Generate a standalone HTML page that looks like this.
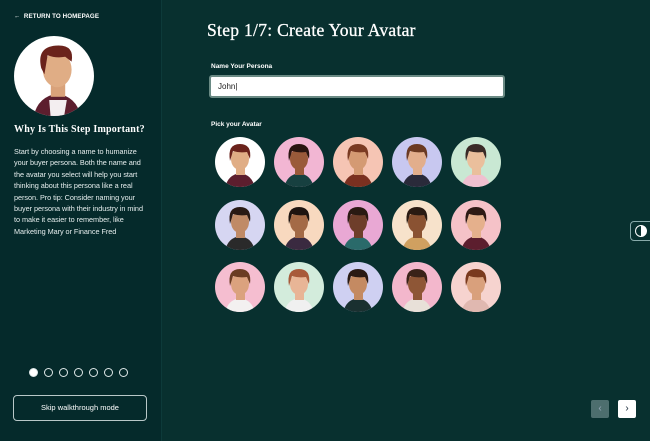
<!DOCTYPE html>
<html><head><meta charset="utf-8"><style>
*{margin:0;padding:0;box-sizing:border-box}
body{width:650px;height:441px;overflow:hidden;background:#08302f;font-family:"Liberation Sans",sans-serif;color:#fff;position:relative}
.side{position:absolute;left:0;top:0;width:162px;height:441px;background:#052a2b;border-right:1px solid #0d3a3a}
.ret{position:absolute;left:14px;top:13px;font-size:6.2px;font-weight:bold;letter-spacing:.1px}
.big{position:absolute;left:14px;top:36px;width:80px;height:80px;border-radius:50%;overflow:hidden}
h3{position:absolute;left:14px;top:124px;font-family:"Liberation Serif",serif;font-weight:bold;font-size:10px;letter-spacing:.2px}
.txt{position:absolute;left:14px;top:146px;width:134px;font-size:7.3px;line-height:11.4px;color:#e6eeee;letter-spacing:-.05px}
.dots{position:absolute;left:29px;top:368px;display:flex;gap:6px}
.dots span{width:9px;height:9px;border-radius:50%;border:1.2px solid #dfe8e8}
.dots span:first-child{background:#fff}
.skip{position:absolute;left:13px;top:395px;width:134px;height:26px;border:1.3px solid #b9c8c8;border-radius:4px;font-size:7.5px;text-align:center;line-height:24px}
h1{position:absolute;left:207px;top:20px;font-family:"Liberation Serif",serif;font-weight:normal;font-size:17.5px;letter-spacing:.3px;-webkit-text-stroke:.3px #fff}
.lab{position:absolute;left:211px;font-size:6.5px;font-weight:bold}
.inp{position:absolute;left:209px;top:75px;width:296px;height:23px;background:#fff;border:2px solid #6a8a84;border-radius:3px;color:#222;font-size:8px;padding-left:7px;line-height:19px}
.av{position:absolute;width:50px;height:50px;border-radius:50%;overflow:hidden}
.tog{position:absolute;left:630px;top:221px;width:22px;height:20px;border:1.2px solid #8aa;border-radius:4px 0 0 4px}
.nb{position:absolute;top:400px;width:18px;height:18px;border-radius:2px;font-size:10px;text-align:center;line-height:18px}
</style></head><body>
<div class="side">
<div class="ret">&#8592;&nbsp; RETURN TO HOMEPAGE</div>
<div class="big"><svg width="80" height="80" viewBox="0 0 50 50"><rect width="50" height="50" fill="#fff"/><path d="M12 52 Q14 38 27 36 Q40 38 42 52Z" fill="#5c1e2e"/><path d="M22 40 L33 40 L31 52 L23 52Z" fill="#f3eef0"/><rect x="23" y="28" width="9" height="10" fill="#d9a27a"/><ellipse cx="27" cy="21" rx="9" ry="11" fill="#e0ad85"/><path d="M17 20 Q14 7 26 6 Q38 5 36 16 L32 13 Q26 14 21 12 L19 24Z" fill="#6b231c"/></svg></div>
<h3>Why Is This Step Important?</h3>
<div class="txt">Start by choosing a name to humanize your buyer persona. Both the name and the avatar you select will help you start thinking about this persona like a real person. Pro tip: Consider naming your buyer persona with their industry in mind to make it easier to remember, like Marketing Mary or Finance Fred</div>
<div class="dots"><span></span><span></span><span></span><span></span><span></span><span></span><span></span></div>
<div class="skip">Skip walkthrough mode</div>
</div>
<h1>Step 1/7: Create Your Avatar</h1>
<div class="lab" style="top:63px">Name Your Persona</div>
<div class="inp">John|</div>
<div class="lab" style="top:121px">Pick your Avatar</div>
<div id="grid"></div>
<div class="tog"><div style="margin:3px 0 0 4px;width:12px;height:12px;border-radius:50%;border:1.3px solid #fff;background:linear-gradient(90deg,#08302f 50%,#fff 50%)"></div></div>
<div class="nb" style="left:591px;background:#4d6e6e;color:#9ab">&#8249;</div>
<div class="nb" style="left:618px;background:#fff;color:#123">&#8250;</div>
<script>
var bgs=["#ffffff","#f2b6d3","#f6c5b4","#c8c8f0","#c9e8d3","#d6d6f2","#f8d9bf","#e9a8d4","#f7e2cb","#f5c2c8","#f5bed0","#d3ecdc","#cfd0f2","#f3b7cc","#f6d3cf"];
var skin=["#e0ad85","#9a5a3a","#d49a73","#e2ae8c","#eabf9c","#c08a66","#a46a46","#6e3e2a","#8a5232","#e5b08c","#dba27e","#e8b596","#c48a62","#8e5636","#d9a07c"];
var hair=["#6b231c","#2a1510","#7a3a22","#6b3a22","#3a2a26","#2a1a14","#1e1410","#2a1a12","#2a1a12","#2e1a14","#6a3c22","#a85a3a","#2a1a14","#3a2218","#7a3a1e"];
var body=["#5c1e2e","#174040","#7a3020","#2a2a3a","#f0c0d0","#2a2a2a","#3a2a40","#2a6a6a","#d0a060","#5c1e2e","#f3f0f0","#f0f0f0","#1a3030","#e8e0d8","#e0b8b0"];
var xs=[215,274,333,392,451],ys=[137,200,262],h="";
for(var i=0;i<15;i++){var x=xs[i%5],y=ys[Math.floor(i/5)];
h+='<div class="av" style="left:'+x+'px;top:'+y+'px"><svg width="50" height="50" viewBox="0 0 50 50"><rect width="50" height="50" fill="'+bgs[i]+'"/><path d="M10 52 Q12 38 25 36 Q38 38 40 52Z" fill="'+body[i]+'"/><rect x="21" y="28" width="9" height="10" fill="'+skin[i]+'"/><ellipse cx="25" cy="22" rx="9" ry="11" fill="'+skin[i]+'"/><path d="M15 24 Q12 7 25 7 Q37 7 35 22 L32 15 Q24 16 18 14Z" fill="'+hair[i]+'"/></svg></div>';}
document.getElementById("grid").innerHTML=h;
</script>
</body></html>
